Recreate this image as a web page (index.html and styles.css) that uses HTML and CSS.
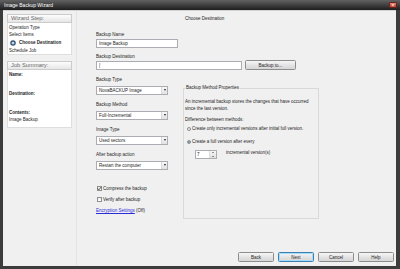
FILE: index.html
```html
<!DOCTYPE html>
<html lang="en">
<head>
  <meta charset="UTF-8">
  <meta name="viewport" content="width=device-width, initial-scale=1.0">
  <title>Image Backup Wizard</title>
  <link rel="stylesheet" href="styles.css">
</head>
<body>
<div class="window">
  <div class="titlebar">
    <span class="title">Image Backup Wizard</span>
    <span class="close">&#215;</span>
  </div>

  <div class="body">
    <!-- Columna izquierda: pasos y resumen -->
    <div class="sidebar">
      <div class="panel">
        <div class="panel-head">Wizard Step:</div>
        <div class="panel-body steps">
          <div class="step">Operation Type</div>
          <div class="step">Select Items</div>
          <div class="step current">
            <svg class="step-icon" viewBox="0 0 12 12">
              <circle cx="6" cy="6" r="5.5" fill="#2e4f6e"/>
              <circle cx="6" cy="6" r="3.2" fill="#8fb4d2"/>
              <circle cx="6" cy="6" r="1.6" fill="#ffffff"/>
            </svg>
            Choose Destination
          </div>
          <div class="step">Schedule Job</div>
        </div>
      </div>

      <div class="panel summary">
        <div class="panel-head">Job Summary:</div>
        <div class="panel-body summary-body">
          <div class="sum-label">Name:</div>
          <div class="sum-label">Destination:</div>
          <div class="sum-label last">Contents:</div>
          <div>Image Backup</div>
        </div>
      </div>
    </div>

    <!-- Contenido principal -->
    <div class="main">
      <div class="heading">Choose Destination</div>

      <div class="label name-label">Backup Name</div>
      <input class="text-input name-input" type="text" value="Image Backup">

      <div class="label dest-label">Backup Destination</div>
      <div class="dest-row">
        <input class="text-input dest-input" type="text" value="|">
        <button class="button browse">Backup to...</button>
      </div>

      <div class="columns">
        <div class="form-col">
          <div class="field">
            <div class="label">Backup Type</div>
            <div class="select"><span class="value">NovaBACKUP Image</span><span class="arrow"></span></div>
          </div>
          <div class="field">
            <div class="label">Backup Method</div>
            <div class="select"><span class="value">Full-Incremental</span><span class="arrow"></span></div>
          </div>
          <div class="field">
            <div class="label">Image Type</div>
            <div class="select"><span class="value">Used sectors</span><span class="arrow"></span></div>
          </div>
          <div class="field">
            <div class="label">After backup action</div>
            <div class="select"><span class="value">Restart the computer</span><span class="arrow"></span></div>
          </div>

          <div class="checks">
            <div class="check-row">
              <span class="checkbox">
                <svg width="5" height="5" viewBox="0 0 5 5"><polyline points="0.7,2.4 1.9,3.8 4.3,0.9" fill="none" stroke="#4a4a4a" stroke-width="0.9"/></svg>
              </span>
              Compress the backup
            </div>
            <div class="check-row">
              <span class="checkbox"></span>
              Verify after backup
            </div>
            <div class="check-row">
              <a class="link" href="#">Encryption Settings</a>&nbsp;(Off)
            </div>
          </div>
        </div>

        <div class="props-col">
          <fieldset class="props">
            <legend>Backup Method Properties</legend>
            <p class="desc">An incremental backup stores the changes that have occurred since the last version.</p>
            <div class="diff">Difference between methods:</div>
            <div class="radio-row first"><span class="radio"></span>Create only incremental versions after initial full version.</div>
            <div class="radio-row second"><span class="radio on"></span>Create a full version after every</div>
            <div class="spin-row">
              <div class="spinner">
                <span class="spin-value">7</span>
                <span class="spin-btns"><span class="up"></span><span class="down"></span></span>
              </div>
              <span class="spin-label">incremental version(s)</span>
            </div>
          </fieldset>
        </div>
      </div>

      <div class="actions">
        <button class="button">Back</button>
        <button class="button default">Next</button>
        <button class="button">Cancel</button>
        <button class="button">Help</button>
      </div>
    </div>
  </div>
</div>
</body>
</html>
```

FILE: styles.css
```css
* {
  box-sizing: border-box;
}
body {
  margin: 0;
  font-family: "Liberation Sans", Arial, sans-serif;
  font-size: 4.5px;
  line-height: 6px;
  color: #1e1e1e;
}
.window {
  width: 400px;
  height: 269px;
  display: flex;
  flex-direction: column;
  background: #3c3c3c;
}
.titlebar {
  height: 10px;
  display: flex;
  align-items: center;
  justify-content: space-between;
  padding: 0 3px 0 4px;
  background: linear-gradient(to bottom, #626262, #1e1e1e);
  color: #ffffff;
  font-size: 5px;
}
.close {
  width: 8px;
  height: 6px;
  background: linear-gradient(to bottom, #e58b7c, #b63a2c);
  border: 1px solid #6e2219;
  border-radius: 1px;
  color: #ffffff;
  font-size: 5px;
  line-height: 4px;
  text-align: center;
}
.body {
  flex: 1;
  display: flex;
  margin: 0 4px 3px 3px;
  background: #f0f0f0;
  border-top: 1px solid #d4d4d4;
}

/* Columna izquierda */
.sidebar {
  width: 74px;
  padding: 3px 0 0 4px;
  border-right: 1px solid #e4e4e4;
}
.panel {
  width: 65px;
}
.panel-head {
  height: 9px;
  padding-left: 3px;
  border: 1px solid #cbcbcb;
  background: linear-gradient(to bottom, #fdfdfd, #e6e6e6);
  color: #6b6b6b;
  font-size: 5.8px;
  line-height: 7px;
}
.panel-body {
  background: #ffffff;
  border: 1px solid #dedede;
  border-top: none;
}
.steps {
  height: 32px;
  padding: 1px 0 0 1px;
}
.step {
  line-height: 7px;
}
.step.current {
  height: 9px;
  display: flex;
  align-items: center;
  font-weight: bold;
}
.step-icon {
  width: 6px;
  height: 6px;
  margin: 0 3px 0 1px;
}
.summary {
  margin-top: 6px;
}
.summary-body {
  height: 58px;
  padding: 1px 0 0 1px;
  line-height: 7px;
}
.sum-label {
  font-weight: bold;
  margin-bottom: 12px;
}
.sum-label.last {
  margin-bottom: 0;
}

/* Contenido principal */
.main {
  flex: 1;
  display: flex;
  flex-direction: column;
  padding: 5px 2px 4px 19px;
}
.heading {
  padding-left: 89px;
}
.name-label {
  margin-top: 10px;
}
.dest-label {
  margin-top: 6px;
}
.text-input {
  display: block;
  height: 9px;
  margin: 1px 0 0 0;
  padding: 0 2px;
  border: 1px solid #abadb3;
  background: #ffffff;
  font-family: inherit;
  font-size: 4.5px;
  color: #1e1e1e;
  outline: none;
}
.name-input {
  width: 82px;
}
.dest-row {
  display: flex;
  align-items: flex-start;
}
.dest-input {
  width: 146px;
}
.button {
  width: 36px;
  height: 10px;
  padding: 0;
  border: 1px solid #8d8d8d;
  border-radius: 1.5px;
  background: linear-gradient(to bottom, #f6f6f6, #e4e4e4 50%, #d6d6d6);
  font-family: inherit;
  font-size: 4.5px;
  color: #1e1e1e;
}
.browse {
  width: 51px;
  margin-left: 3px;
}
.button.default {
  border-color: #3c7fb1;
  box-shadow: inset 0 0 0 1px #a6dcf7;
}
.columns {
  display: flex;
  margin-top: 7px;
}
.form-col {
  width: 87px;
}
.field {
  margin-bottom: 7.5px;
}
.select {
  display: flex;
  width: 72px;
  height: 9px;
  margin-top: 2.5px;
  border: 1px solid #abadb3;
  background: #ffffff;
}
.select .value {
  flex: 1;
  padding-left: 2px;
  line-height: 7px;
}
.select .arrow {
  width: 6px;
  display: flex;
  align-items: center;
  justify-content: center;
  border-left: 1px solid #dadada;
  background: linear-gradient(to bottom, #f7f7f7, #e2e2e2);
}
.select .arrow::after {
  content: "";
  border-left: 1.5px solid transparent;
  border-right: 1.5px solid transparent;
  border-top: 2px solid #222222;
}
.checks {
  margin-top: 16px;
}
.check-row {
  display: flex;
  align-items: center;
  height: 6px;
  margin-bottom: 5px;
}
.checkbox {
  position: relative;
  width: 5px;
  height: 5px;
  margin: 0 1px 0 1px;
  border: 0.6px solid #8e8f8f;
  background: linear-gradient(to bottom, #ececec, #ffffff);
}
/* la marca va encima de la casilla */
.checkbox svg {
  position: absolute;
  left: -0.6px;
  top: -0.6px;
}
.link {
  color: #2b2bd9;
  text-decoration: underline;
}

/* Propiedades del método */
.props-col {
  width: 136px;
}
.props {
  height: 134px;
  margin: 8px 0 0 0;
  padding: 0 2px 0 1px;
  border: 1px solid #d9d9d9;
}
.props legend {
  padding: 0 1px;
  line-height: 6px;
}
.desc {
  margin: 6.5px 0 0 0;
  line-height: 7px;
}
.diff {
  margin-top: 5px;
}
.radio-row {
  display: flex;
  align-items: center;
  height: 6px;
}
.radio-row.first {
  margin-top: 3px;
}
.radio-row.second {
  margin-top: 7.5px;
}
.radio {
  width: 4px;
  height: 4px;
  margin: 0 1px 0 2px;
  border: 0.6px solid #8a8a8a;
  border-radius: 50%;
  background: #f4f4f4;
}
.radio.on {
  background: radial-gradient(circle, #2d5d86 0, #4a7fae 45%, #e8e8e8 60%);
}
.spin-row {
  display: flex;
  align-items: flex-start;
  margin-top: 5px;
}
.spinner {
  display: flex;
  width: 22px;
  height: 9px;
  margin-left: 10px;
  border: 1px solid #abadb3;
  background: #ffffff;
}
.spin-value {
  flex: 1;
  padding-left: 1px;
  line-height: 7px;
}
.spin-btns {
  width: 7px;
  display: flex;
  flex-direction: column;
  border-left: 1px solid #dcdcdc;
  background: linear-gradient(to bottom, #f6f6f6, #e0e0e0);
}
.spin-btns span {
  flex: 1;
  display: flex;
  align-items: center;
  justify-content: center;
}
.spin-btns .up::after {
  content: "";
  border-left: 1.5px solid transparent;
  border-right: 1.5px solid transparent;
  border-bottom: 1.5px solid #333333;
}
.spin-btns .down::after {
  content: "";
  border-left: 1.5px solid transparent;
  border-right: 1.5px solid transparent;
  border-top: 1.5px solid #333333;
}
.spin-label {
  margin-left: 9px;
}
.actions {
  margin-top: auto;
  display: flex;
  justify-content: flex-end;
  gap: 4px;
}
```
